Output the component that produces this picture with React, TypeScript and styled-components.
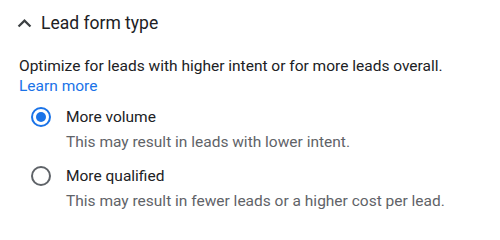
import React from "react";
import styled, { createGlobalStyle } from "styled-components";

const Global = createGlobalStyle`
  html, body { margin: 0; padding: 0; background: #fff; }
  body { font-family: Roboto, "Noto Sans", Arial, sans-serif; -webkit-font-smoothing: antialiased; }
`;

const Panel = styled.section`
  width: 500px;
  height: 221px;
  box-sizing: border-box;
  background: #fff;
  overflow: hidden;
`;

const Header = styled.div`
  display: flex;
  align-items: center;
  height: 46px;
  padding-left: 11px;
  gap: 3px;
`;

const Title = styled.h2`
  margin: 0;
  font-size: 17.5px;
  font-weight: 400;
  color: #202124;
  line-height: 24px;
`;

const Body = styled.div`
  padding: 10px 0 0 19px;
`;

const Description = styled.p`
  margin: 0;
  font-size: 15.5px;
  line-height: 20px;
  color: #202124;
`;

const Link = styled.a`
  display: block;
  color: #1a73e8;
  text-decoration: none;
`;

const Options = styled.div`
  display: flex;
  flex-direction: column;
  gap: 14px;
  margin-top: 11px;
  padding-left: 12px;
`;

const Option = styled.label`
  display: flex;
  align-items: flex-start;
  gap: 15px;
  cursor: pointer;
`;

const Radio = styled.span<{ $checked: boolean }>`
  flex: none;
  width: 20px;
  height: 20px;
  box-sizing: border-box;
  border-radius: 50%;
  border: 2px solid ${(p) => (p.$checked ? "#1a73e8" : "#5f6368")};
  display: flex;
  align-items: center;
  justify-content: center;
  &::after {
    content: "";
    width: 10px;
    height: 10px;
    border-radius: 50%;
    background: ${(p) => (p.$checked ? "#1a73e8" : "transparent")};
  }
`;

const OptionText = styled.div`
  display: flex;
  flex-direction: column;
  gap: 5px;
`;

const Label = styled.span`
  font-size: 15.5px;
  line-height: 20px;
  color: #202124;
`;

const Hint = styled.span`
  font-size: 15.5px;
  line-height: 20px;
  color: #5f6368;
`;

const Chevron = () => (
  <svg width="27" height="27" viewBox="0 0 24 24" aria-hidden="true">
    <path d="M7.41 15.41 12 10.83l4.59 4.58L18 14l-6-6-6 6z" fill="#3c4043" />
  </svg>
);

const options = [
  { label: "More volume", hint: "This may result in leads with lower intent.", checked: true },
  { label: "More qualified", hint: "This may result in fewer leads or a higher cost per lead.", checked: false },
];

export default function App() {
  return (
    <>
      <Global />
      <Panel>
        <Header>
          <Chevron />
          <Title>Lead form type</Title>
        </Header>
        <Body>
          <Description>
            Optimize for leads with higher intent or for more leads overall.
            <Link href="#">Learn more</Link>
          </Description>
          <Options>
            {options.map((o) => (
              <Option key={o.label}>
                <Radio $checked={o.checked} />
                <OptionText>
                  <Label>{o.label}</Label>
                  <Hint>{o.hint}</Hint>
                </OptionText>
              </Option>
            ))}
          </Options>
        </Body>
      </Panel>
    </>
  );
}
